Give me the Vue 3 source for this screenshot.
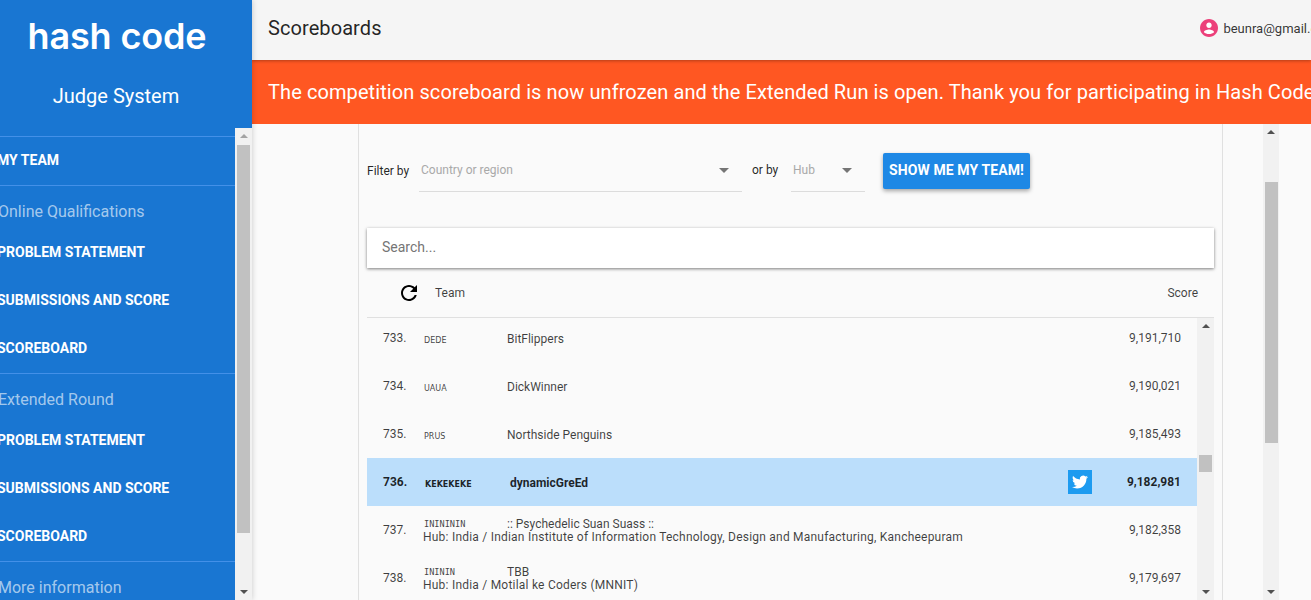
<script setup>
const navGroups = [
  { items: ['MY TEAM'] },
  { title: 'Online Qualifications', items: ['PROBLEM STATEMENT', 'SUBMISSIONS AND SCORE', 'SCOREBOARD'] },
  { title: 'Extended Round', items: ['PROBLEM STATEMENT', 'SUBMISSIONS AND SCORE', 'SCOREBOARD'] },
  { title: 'More information', items: [] },
]
const rows = [
  { rank: '733.', code: 'DEDE', name: 'BitFlippers', score: '9,191,710' },
  { rank: '734.', code: 'UAUA', name: 'DickWinner', score: '9,190,021' },
  { rank: '735.', code: 'PRUS', name: 'Northside Penguins', score: '9,185,493' },
  { rank: '736.', code: 'KEKEKEKE', name: 'dynamicGreEd', score: '9,182,981', mine: true },
  { rank: '737.', code: 'ININININ', name: ':: Psychedelic Suan Suass ::', score: '9,182,358', serif: true, hub: 'Hub: India / Indian Institute of Information Technology, Design and Manufacturing, Kancheepuram' },
  { rank: '738.', code: 'INININ', name: 'TBB', score: '9,179,697', serif: true, hub: 'Hub: India / Motilal ke Coders (MNNIT)' },
]
</script>

<template>
  <div class="app">
    <aside class="sidebar">
      <header class="brand">
        <div class="logo">hash code</div>
        <div class="judge">Judge System</div>
      </header>
      <div class="side-body">
        <nav class="nav">
          <section v-for="(g, i) in navGroups" :key="i" class="nav-group">
            <div v-if="g.title" class="nav-title">{{ g.title }}</div>
            <a v-for="item in g.items" :key="item" class="nav-item">{{ item }}</a>
          </section>
        </nav>
        <div class="sb sb-side">
          <span class="arrow up muted"></span>
          <div class="thumb"></div>
          <span class="arrow down"></span>
        </div>
      </div>
    </aside>

    <main class="main">
      <div class="topbar">
        <h1 class="title">Scoreboards</h1>
        <div class="user">
          <svg class="avatar" viewBox="2 2 20 20"><path fill="#ec407a" d="M12 2C6.48 2 2 6.48 2 12s4.48 10 10 10 10-4.48 10-10S17.52 2 12 2z"/><path fill="#fff" d="M12 6c1.66 0 3 1.34 3 3s-1.34 3-3 3-3-1.34-3-3 1.34-3 3-3zm0 12.6c-2.3 0-4.3-.7-5.6-2 .03-1.9 3.7-2.9 5.6-2.9 1.9 0 5.57 1 5.6 2.9-1.3 1.3-3.3 2-5.6 2z"/></svg>
          <span>beunra@gmail.com</span>
        </div>
      </div>
      <div class="banner">The competition scoreboard is now unfrozen and the Extended Run is open. Thank you for participating in Hash Code</div>

      <div class="content">
        <div class="card">
          <div class="filters">
            <span class="label first">Filter by</span>
            <div class="select wide"><span>Country or region</span><i class="caret"></i></div>
            <span class="label">or by</span>
            <div class="select narrow"><span>Hub</span><i class="caret"></i></div>
            <button class="cta">SHOW ME MY TEAM!</button>
          </div>

          <div class="search">Search...</div>

          <div class="thead">
            <svg class="refresh" viewBox="0 0 24 24"><path d="M17.65 6.35C16.2 4.9 14.21 4 12 4c-4.42 0-7.99 3.58-7.99 8s3.57 8 7.99 8c3.73 0 6.84-2.55 7.73-6h-2.08c-.82 2.33-3.04 4-5.65 4-3.31 0-6-2.69-6-6s2.69-6 6-6c1.66 0 3.14.69 4.22 1.78L13 11h7V4l-2.35 2.35z"/></svg>
            <span class="th-team">Team</span>
            <span class="th-score">Score</span>
          </div>

          <div class="table-wrap">
            <div class="tbody">
              <div v-for="r in rows" :key="r.rank" class="row" :class="{ mine: r.mine }">
                <span class="rank">{{ r.rank }}</span>
                <div class="team">
                  <div class="line">
                    <span class="code" :class="{ serif: r.serif }">{{ r.code }}</span>
                    <span class="name">{{ r.name }}</span>
                  </div>
                  <div v-if="r.hub" class="hub">{{ r.hub }}</div>
                </div>
                <span v-if="r.mine" class="tw">
                  <svg viewBox="0 0 24 24"><path fill="#fff" d="M23.953 4.57a10 10 0 01-2.825.775 4.958 4.958 0 002.163-2.723c-.951.555-2.005.959-3.127 1.184a4.92 4.92 0 00-8.384 4.482C7.69 8.095 4.067 6.13 1.64 3.162a4.822 4.822 0 00-.666 2.475c0 1.71.87 3.213 2.188 4.096a4.904 4.904 0 01-2.228-.616v.06a4.923 4.923 0 003.946 4.827 4.996 4.996 0 01-2.212.085 4.936 4.936 0 004.604 3.417 9.867 9.867 0 01-6.102 2.105c-.39 0-.779-.023-1.17-.067a13.995 13.995 0 007.557 2.209c9.053 0 13.998-7.496 13.998-13.985 0-.21 0-.42-.015-.63A9.935 9.935 0 0024 4.59z"/></svg>
                </span>
                <span class="score">{{ r.score }}</span>
              </div>
            </div>
            <div class="sb sb-inner">
              <span class="arrow up"></span>
              <div class="thumb"></div>
              <span class="arrow down"></span>
            </div>
          </div>
        </div>

        <div class="sb sb-main">
          <span class="arrow up"></span>
          <div class="thumb"></div>
          <span class="arrow down"></span>
        </div>
      </div>
    </main>
  </div>
</template>

<style>
html, body { margin: 0; overflow: hidden; background: #fafafa; }
</style>

<style scoped>
.app {
  display: flex;
  height: 100vh;
  overflow: hidden;
  font-family: Roboto, "Liberation Sans", sans-serif;
  color: rgba(0, 0, 0, 0.87);
  background: #fafafa;
}
.sidebar {
  flex: 0 0 252px;
  display: flex;
  flex-direction: column;
  background: #1976d2;
  color: #fff;
  box-shadow: 0 0 6px rgba(0, 0, 0, 0.2);
  position: relative;
  z-index: 3;
}
.brand { height: 128px; padding-right: 20px; text-align: center; flex: none; }
.logo {
  font-family: Inter, sans-serif;
  font-size: 36px;
  font-weight: 600;
  line-height: 36px;
  padding-top: 18px;
  margin-left: 2px;
  letter-spacing: -0.15px;
}
.judge { font-size: 20px; line-height: 24px; margin-top: 30px; }
.side-body { flex: 1; display: flex; min-height: 0; }
.nav { flex: 1; min-width: 0; overflow: hidden; padding-top: 8px; }
.nav-group { border-top: 1px solid #4390e8; padding-bottom: 1px; }
.nav-group:first-child { padding-bottom: 0; }
.nav-group:first-child .nav-item { line-height: 46px; }
.nav-title {
  height: 42px;
  line-height: 52px;
  font-size: 16px;
  margin-left: -2px;
  color: rgba(255, 255, 255, 0.62);
  white-space: nowrap;
}
.nav-item {
  display: block;
  height: 48px;
  line-height: 48px;
  font-size: 14px;
  font-weight: 700;
  margin-left: -3px;
  white-space: nowrap;
}

.sb { flex: none; display: flex; flex-direction: column; align-items: center; background: #f1f1f1; position: relative; }
.sb .thumb { background: #c1c1c1; width: 13px; }
.arrow { width: 0; height: 0; border-left: 4px solid transparent; border-right: 4px solid transparent; position: absolute; left: 50%; margin-left: -4px; }
.arrow.up { top: 6px; border-bottom: 4px solid #505050; }
.arrow.down { bottom: 6px; border-top: 4px solid #505050; }
.arrow.muted { border-bottom-color: #a3a3a3; }
.sb-side { width: 17px; height: 472px; }
.sb-side .thumb { margin-top: 17px; height: 388px; }
.sb-main { width: 16px; height: 476px; margin-left: 40px; }
.sb-main .thumb { margin-top: 58px; height: 261px; }
.sb-inner { width: 17px; height: 282px; }
.sb-inner .thumb { margin-top: 137px; height: 17px; }

.main { flex: 1; min-width: 0; display: flex; flex-direction: column; overflow: hidden; }
.topbar {
  flex: none;
  height: 60px;
  box-sizing: border-box;
  padding: 0 0 4px 16px;
  display: flex;
  align-items: center;
  background: #f5f5f5;
  white-space: nowrap;
  position: relative;
  z-index: 2;
  box-shadow: 0 1px 3px rgba(0, 0, 0, 0.3);
}
.title { margin: 0; font-size: 20px; font-weight: 400; letter-spacing: 0.08px; }
.user { margin-left: auto; margin-right: -25px; display: flex; align-items: center; font-size: 13px; color: rgba(0, 0, 0, 0.8); }
.avatar { width: 18px; height: 18px; margin-right: 5px; }
.banner {
  flex: none;
  height: 64px;
  line-height: 64px;
  padding-left: 16px;
  background: #ff5722;
  color: #fff;
  font-size: 20px;
  letter-spacing: 0.09px;
  white-space: nowrap;
  position: relative;
  z-index: 1;
}
.content { flex: 1; min-height: 0; display: flex; padding-left: 106px; align-items: flex-start; }
.card {
  flex: none;
  width: 865px;
  box-sizing: border-box;
  height: 476px;
  padding: 0 8px;
  border-left: 1px solid #e0e0e0;
  border-right: 1px solid #e0e0e0;
  overflow: hidden;
}
.filters { display: flex; align-items: flex-start; padding-top: 28px; font-size: 12px; }
.label { line-height: 36px; width: 26px; margin: 0 13px 0 10px; white-space: nowrap; }
.label.first { width: 42px; margin: 1px 10px 0 0; line-height: 36px; }
.select {
  height: 40px;
  box-sizing: border-box;
  border-bottom: 1px solid #dcdcdc;
  padding-left: 2px;
  display: flex;
  align-items: flex-start;
  line-height: 36px;
  color: #a9a9a9;
  position: relative;
}
.select.wide { width: 323px; }
.select.narrow { width: 74px; }
.caret {
  position: absolute;
  right: 13px;
  top: 16px;
  border-left: 5px solid transparent;
  border-right: 5px solid transparent;
  border-top: 5px solid #757575;
}
.cta {
  margin: 1px 0 0 18px;
  width: 147px;
  height: 36px;
  padding: 0 0 2px;
  border: 0;
  border-radius: 2px;
  background: #1e88e5;
  color: #fff;
  font: 700 14px Roboto, sans-serif;
  letter-spacing: 0.1px;
  box-shadow: 0 2px 4px rgba(0, 0, 0, 0.35);
}
.search {
  margin-top: 36px;
  height: 40px;
  line-height: 39px;
  padding-left: 15px;
  background: #fff;
  font-size: 14px;
  color: #757575;
  box-shadow: 0 1px 3px rgba(0, 0, 0, 0.5);
}
.thead {
  height: 50px;
  box-sizing: border-box;
  display: flex;
  align-items: center;
  border-bottom: 1px solid #e0e0e0;
  font-size: 12px;
  color: rgba(0, 0, 0, 0.75);
  padding: 1px 16px 0 30px;
}
.refresh { width: 24px; height: 24px; margin-right: 14px; }
.th-score { margin-left: auto; }
.table-wrap { display: flex; height: 282px; overflow: hidden; }
.tbody { flex: 1; min-width: 0; margin-top: -4px; font-size: 12px; color: rgba(0, 0, 0, 0.75); }
.row { height: 48px; display: flex; align-items: center; padding: 0 16px; }
.row.mine { background: #bbdefb; font-weight: 700; color: rgba(0, 0, 0, 0.85); }
.rank { flex: 0 0 41px; margin-top: -1px; }
.team { flex: 1; min-width: 0; line-height: 13px; white-space: nowrap; padding-top: 2px; }
.line { display: flex; align-items: center; }
.code {
  flex: 0 0 83px;
  font-family: "DejaVu Sans", sans-serif;
  font-size: 8px;
  padding-top: 2px;
}
.code.serif { font-family: "DejaVu Sans Mono", monospace; font-size: 8.6px; font-weight: 400; padding-top: 0; }
.row.mine .code { flex-basis: 85px; margin-left: 1px; font-weight: 700; }
.hub { letter-spacing: 0.22px; margin-left: -1px; }
.tw { width: 24px; height: 24px; background: #1d9bf0; display: flex; align-items: center; justify-content: center; margin-right: 35px; }
.tw svg { width: 16px; height: 16px; }
.score { flex: none; margin-top: -1px; }
.row.mine .score { margin-top: 0; }
</style>
